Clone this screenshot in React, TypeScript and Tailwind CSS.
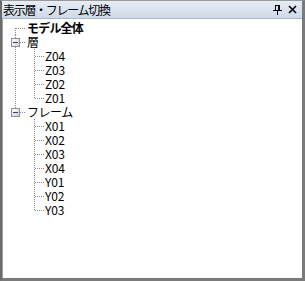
import React from "react";

type Row = {
  label: string;
  bold?: boolean;
  level: 0 | 1;
  box?: boolean;
  root: "none" | "down" | "full" | "up";
  child: "none" | "full" | "up";
};

const rows: Row[] = [
  { label: "モデル全体", bold: true, level: 0, root: "down", child: "none" },
  { label: "層", level: 0, box: true, root: "full", child: "none" },
  { label: "Z04", level: 1, root: "full", child: "full" },
  { label: "Z03", level: 1, root: "full", child: "full" },
  { label: "Z02", level: 1, root: "full", child: "full" },
  { label: "Z01", level: 1, root: "full", child: "up" },
  { label: "フレーム", level: 0, box: true, root: "up", child: "none" },
  { label: "X01", level: 1, root: "none", child: "full" },
  { label: "X02", level: 1, root: "none", child: "full" },
  { label: "X03", level: 1, root: "none", child: "full" },
  { label: "X04", level: 1, root: "none", child: "full" },
  { label: "Y01", level: 1, root: "none", child: "full" },
  { label: "Y02", level: 1, root: "none", child: "full" },
  { label: "Y03", level: 1, root: "none", child: "up" },
];

const DOT = "#8c8c8c";

function Connector({ row }: { row: Row }) {
  const H = 14;
  const c = 7;
  const rx = 12.5;
  const cx = 31.5;
  const dash = { stroke: DOT, strokeWidth: 1, strokeDasharray: "1 1", shapeRendering: "crispEdges" as const };
  const w = row.level === 0 ? 23 : 41;
  return (
    <svg width={w} height={H} className="shrink-0 block">
      {row.root === "down" && <line x1={rx} y1={c} x2={rx} y2={H} {...dash} />}
      {row.root === "full" && <line x1={rx} y1={0} x2={rx} y2={H} {...dash} />}
      {row.root === "up" && <line x1={rx} y1={0} x2={rx} y2={c + 1} {...dash} />}
      {row.child === "full" && <line x1={cx} y1={0} x2={cx} y2={H} {...dash} />}
      {row.child === "up" && <line x1={cx} y1={0} x2={cx} y2={c + 1} {...dash} />}
      {row.level === 0 && (
        <line x1={row.box ? 17 : 13} y1={c + 0.5} x2={23} y2={c + 0.5} {...dash} />
      )}
      {row.level === 1 && <line x1={32} y1={c + 0.5} x2={41} y2={c + 0.5} {...dash} />}
      {row.box && (
        <g shapeRendering="crispEdges">
          <rect x={8.5} y={c - 3.5} width={8} height={8} fill="#ffffff" stroke="#919191" />
          <rect x={9} y={c - 3} width={7} height={7} fill="url(#boxg)" />
          <line x1={10} y1={c + 0.5} x2={15} y2={c + 0.5} stroke="#2f3f7f" strokeWidth={1} />
        </g>
      )}
      <defs>
        <linearGradient id="boxg" x1="0" y1="0" x2="1" y2="1">
          <stop offset="0" stopColor="#ffffff" />
          <stop offset="1" stopColor="#d0d0d0" />
        </linearGradient>
      </defs>
    </svg>
  );
}

export default function App() {
  return (
    <div
      className="w-[305px] h-[281px] bg-[#f0f0f0] flex flex-col border-l-2 border-l-[#6b6b6b] border-r-[3px] border-r-[#7a7a7a] border-b-[3px] border-b-[#7a7a7a] border-t border-t-[#9a9a9a] overflow-hidden"
      style={{ fontFamily: '"Noto Sans CJK JP", "Noto Sans", sans-serif' }}
    >
      <div className="h-[18px] shrink-0 flex items-center bg-gradient-to-b from-[#e6edf5] to-[#cfdae7] border-b border-b-[#a9b6c4] pl-[1px] pr-[5px]">
        <span className="text-[12px] leading-none text-black tracking-[-1.3px]">表示層・フレーム切換</span>
        <div className="ml-auto flex items-center gap-[6px]">
          <svg width="9" height="11" viewBox="0 0 9 11" shapeRendering="crispEdges">
            <rect x="2" y="1" width="4" height="5" fill="none" stroke="#000" strokeWidth="1" />
            <rect x="5" y="1" width="1" height="5" fill="#000" />
            <rect x="0" y="6" width="9" height="1" fill="#000" />
            <rect x="4" y="7" width="1" height="4" fill="#000" />
          </svg>
          <svg width="9" height="9" viewBox="0 0 9 9">
            <path d="M1 1 L8 8 M8 1 L1 8" stroke="#000" strokeWidth="1.6" />
          </svg>
        </div>
      </div>
      <div className="flex-1 bg-white border-l border-l-[#a0a0a0] pt-[2px]">
        {rows.map((r, i) => (
          <div key={i} className="flex items-center h-[14px]">
            <Connector row={r} />
            <span
              className={
                "ml-[1px] text-[12px] leading-[12px] text-black whitespace-nowrap " +
                (r.bold ? "font-bold tracking-[-0.8px]" : r.level === 0 ? "tracking-[-0.5px]" : "tracking-[-0.2px]")
              }
            >
              {r.label}
            </span>
          </div>
        ))}
      </div>
    </div>
  );
}
